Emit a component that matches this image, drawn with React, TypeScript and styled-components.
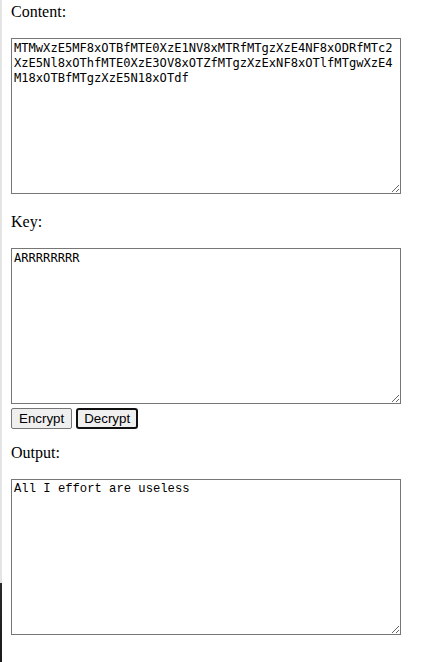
import React from "react";
import styled, { createGlobalStyle } from "styled-components";

const GlobalStyle = createGlobalStyle`
  html, body { margin: 0; padding: 0; background: #ffffff; }
  body { font-family: "Liberation Serif", "Times New Roman", serif; color: #000; }
`;

const Page = styled.div`
  display: flex;
  flex-direction: column;
  align-items: flex-start;
  padding: 3px 0 0 11px;
`;

const EdgeStrip = styled.div`
  position: fixed;
  left: 0;
  top: 0;
  width: 2px;
  height: 100%;
  background: linear-gradient(
    to bottom,
    #e4e4e4 0px,
    #e4e4e4 583px,
    #2a2a2a 583px,
    #1a1a1a 100%
  );
`;

const Label = styled.div<{ $gap: number }>`
  font-family: "Liberation Serif", "Times New Roman", serif;
  font-size: 16px;
  line-height: 18px;
  margin-top: ${(p) => p.$gap}px;
`;

const Area = styled.textarea<{ $mono: "sans" | "serif" }>`
  box-sizing: border-box;
  width: 390px;
  height: 156px;
  margin: 17px 0 0 0;
  padding: 2px;
  border: 1px solid #767676;
  border-radius: 0;
  background: #ffffff;
  color: #000000;
  font-family: ${(p) =>
    p.$mono === "sans"
      ? '"DejaVu Sans Mono", monospace'
      : '"Liberation Mono", "Courier New", monospace'};
  font-size: ${(p) => (p.$mono === "sans" ? "12.1px" : "12.2px")};
  line-height: 15px;
  overflow: hidden;
  outline: none;
  display: block;
`;

const ButtonRow = styled.div`
  display: flex;
  gap: 4px;
  margin-top: 4px;
`;

const Button = styled.button<{ $focused?: boolean }>`
  box-sizing: border-box;
  height: 21px;
  padding: ${(p) => (p.$focused ? "0 6px" : "0 7px")};
  border: ${(p) => (p.$focused ? "2px solid #101010" : "1px solid #767676")};
  border-radius: ${(p) => (p.$focused ? "3px" : "2px")};
  background: #efefef;
  color: #000;
  font-family: "Liberation Sans", Arial, sans-serif;
  font-size: 13.33px;
  line-height: 15px;
  display: flex;
  align-items: center;
  justify-content: center;
`;

const content =
  "MTMwXzE5MF8xOTBfMTE0XzE1NV8xMTRfMTgzXzE4NF8xODRfMTc2XzE5Nl8xOThfMTE0XzE3OV8xOTZfMTgzXzExNF8xOTlfMTgwXzE4M18xOTBfMTgzXzE5N18xOTdf";

export default function App() {
  return (
    <>
      <GlobalStyle />
      <EdgeStrip />
      <Page>
        <Label $gap={0}>Content:</Label>
        <Area $mono="sans" defaultValue={content} spellCheck={false} />
        <Label $gap={19}>Key:</Label>
        <Area $mono="sans" defaultValue="ARRRRRRRR" spellCheck={false} />
        <ButtonRow>
          <Button>Encrypt</Button>
          <Button $focused>Decrypt</Button>
        </ButtonRow>
        <Label $gap={15}>Output:</Label>
        <Area $mono="serif" defaultValue="All I effort are useless" spellCheck={false} />
      </Page>
    </>
  );
}
